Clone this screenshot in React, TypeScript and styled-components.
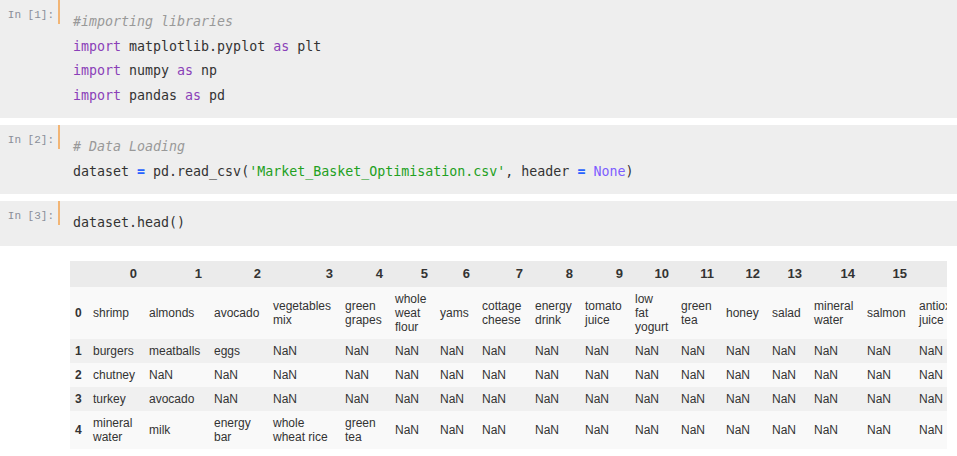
import React from 'react';
import styled, { createGlobalStyle } from 'styled-components';

const GlobalStyle = createGlobalStyle`
  body {
    margin: 0;
    background: #ffffff;
  }
`;

const COL_WIDTHS = [18, 56, 65, 59, 72, 50, 45, 42, 53, 50, 50, 46, 45, 46, 42, 53, 52, 85];

const ROWS: string[][] = [
  ['shrimp', 'almonds', 'avocado', 'vegetables mix', 'green grapes', 'whole weat flour', 'yams', 'cottage cheese', 'energy drink', 'tomato juice', 'low fat yogurt', 'green tea', 'honey', 'salad', 'mineral water', 'salmon', 'antioxydant juice'],
  ['burgers', 'meatballs', 'eggs'],
  ['chutney'],
  ['turkey', 'avocado'],
  ['mineral water', 'milk', 'energy bar', 'whole wheat rice', 'green tea'],
];

const fillRow = (row: string[]) => Array.from({ length: 17 }, (_, i) => row[i] ?? 'NaN');

const App: React.FC = () => {
  return (
    <>
      <GlobalStyle />
      <Notebook>
        <Cell>
          <Prompt>In [1]:</Prompt>
          <Marker />
          <Code>
            <Line><Comment>#importing libraries</Comment></Line>
            <Line><Keyword>import</Keyword> matplotlib.pyplot <Keyword>as</Keyword> plt</Line>
            <Line><Keyword>import</Keyword> numpy <Keyword>as</Keyword> np</Line>
            <Line><Keyword>import</Keyword> pandas <Keyword>as</Keyword> pd</Line>
          </Code>
        </Cell>

        <Cell>
          <Prompt>In [2]:</Prompt>
          <Marker />
          <Code>
            <Line><Comment># Data Loading</Comment></Line>
            <Line>
              dataset <Operator>=</Operator> pd.read_csv(<Str>'Market_Basket_Optimisation.csv'</Str>, header <Operator>=</Operator> <Const>None</Const>)
            </Line>
          </Code>
        </Cell>

        <Cell>
          <Prompt>In [3]:</Prompt>
          <Marker />
          <Code>
            <Line>dataset.head()</Line>
          </Code>
        </Cell>

        <Output>
          <Table>
            <colgroup>
              {COL_WIDTHS.map((w, i) => (
                <col key={i} style={{ width: w }} />
              ))}
            </colgroup>
            <thead>
              <HeadRow>
                <HeadCell />
                {Array.from({ length: 17 }, (_, i) => (
                  <HeadCell key={i}>{i < 16 ? i : ''}</HeadCell>
                ))}
              </HeadRow>
            </thead>
            <tbody>
              {ROWS.map((row, r) => (
                <BodyRow key={r} $shade={r % 2 === 1}>
                  <IndexCell>{r}</IndexCell>
                  {fillRow(row).map((v, c) => (
                    <DataCell key={c}>{v}</DataCell>
                  ))}
                </BodyRow>
              ))}
            </tbody>
          </Table>
        </Output>
      </Notebook>
    </>
  );
};

export default App;

const Notebook = styled.div`
  width: 957px;
  height: 456px;
  overflow: hidden;
`;

const Cell = styled.div`
  display: flex;
  align-items: flex-start;
  background: #eeeeee;
  margin-bottom: 7px;
`;

const Prompt = styled.div`
  width: 58px;
  flex-shrink: 0;
  box-sizing: border-box;
  padding: 8px 4px 0 0;
  text-align: right;
  font-family: 'Liberation Mono', 'DejaVu Sans Mono', monospace;
  font-size: 11px;
  line-height: 14px;
  color: #8a8f99;
`;

const Marker = styled.div`
  width: 2px;
  height: 24px;
  flex-shrink: 0;
  background: #f2b575;
`;

const Code = styled.div`
  flex: 1;
  padding: 10px 0 10px 13px;
  font-family: 'DejaVu Sans Mono', 'Liberation Mono', monospace;
  font-size: 13.3px;
  line-height: 24.5px;
  color: #333333;
  white-space: pre;
`;

const Line = styled.div``;

const Keyword = styled.span`
  color: #8a3fb8;
`;

const Comment = styled.span`
  color: #999999;
  font-style: italic;
`;

const Str = styled.span`
  color: #22a022;
`;

const Operator = styled.span`
  color: #2962ff;
  font-weight: bold;
`;

const Const = styled.span`
  color: #7c5cff;
`;

const Output = styled.div`
  margin: 15px 10px 0 70px;
  overflow: hidden;
`;

const Table = styled.table`
  border-collapse: collapse;
  table-layout: fixed;
  width: 929px;
  font-family: 'Liberation Sans', Arial, sans-serif;
  font-size: 12px;
  color: #333333;
`;

const HeadRow = styled.tr`
  background: #ebebeb;
`;

const HeadCell = styled.th`
  padding: 5px 7px 5px 5px;
  text-align: right;
  font-size: 13px;
  line-height: 16px;
  font-weight: bold;
  vertical-align: middle;
`;

const BodyRow = styled.tr<{ $shade: boolean }>`
  background: ${({ $shade }) => ($shade ? '#f0f0f0' : '#f9f9f9')};
`;

const IndexCell = styled.th`
  padding: 5px 0 5px 5px;
  text-align: left;
  font-weight: bold;
  line-height: 14px;
  vertical-align: middle;
`;

const DataCell = styled.td`
  padding: 5px 7px 5px 5px;
  text-align: left;
  line-height: 14px;
  vertical-align: middle;
`;
